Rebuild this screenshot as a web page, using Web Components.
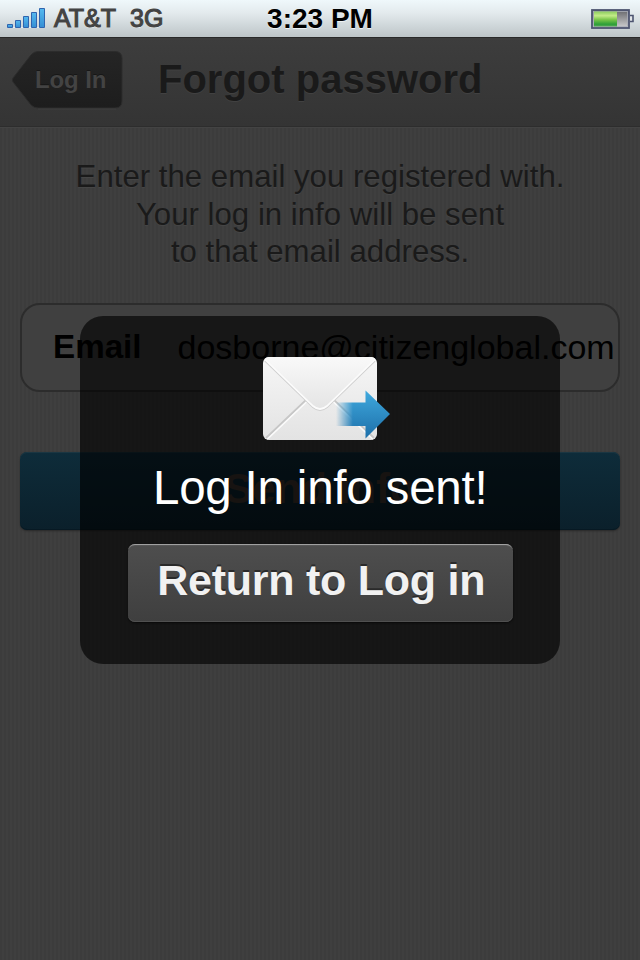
<!DOCTYPE html>
<html lang="en">
<head>
<meta charset="utf-8">
<title>Forgot password</title>
<style>
body{margin:0;width:640px;height:960px;overflow:hidden;font-family:"Liberation Sans",Arial,sans-serif}
</style>
</head>
<body>
<phone-screen>
  <status-bar slot="status" carrier="AT&amp;T" network="3G" time="3:23 PM"></status-bar>
  <nav-header slot="header"><back-button slot="back">Log In</back-button>Forgot password</nav-header>
  <intro-text>Enter the email you registered with.<br>Your log in info will be sent<br>to that email address.</intro-text>
  <form-field label="Email">dosborne@citizenglobal.com</form-field>
  <submit-button>Send info</submit-button>
  <message-dialog slot="dialog">
    <mail-sent-icon slot="icon"></mail-sent-icon>
    Log In info sent!
    <dialog-button slot="action">Return to Log in</dialog-button>
  </message-dialog>
</phone-screen>
<script>
function define(name, html) {
  customElements.define(name, class extends HTMLElement {
    constructor() {
      super();
      const t = document.createElement('template');
      t.innerHTML = html;
      this.attachShadow({mode: 'open'}).append(t.content.cloneNode(true));
    }
    connectedCallback() {
      this.shadowRoot.querySelectorAll('[data-attr]').forEach(n => {
        n.textContent = this.getAttribute(n.dataset.attr);
      });
    }
  });
}

define('phone-screen', `<style>
:host{position:relative;display:flex;flex-direction:column;width:640px;height:960px;overflow:hidden;background:repeating-linear-gradient(90deg,#3c3c3c 0 2px,#3f3f3f 2px 4px)}
main{display:flex;flex-direction:column;padding:31px 20px 0}
</style><slot name="status"></slot><slot name="header"></slot><main><slot></slot></main><slot name="dialog"></slot>`);

define('status-bar', `<style>
:host{display:grid;grid-template-columns:1fr auto 1fr;height:37px;box-sizing:border-box;background:linear-gradient(#eff8fb 0,#e3eaed 35%,#bdc5c8 100%);align-items:start}
.left{display:flex;gap:14px;padding:4px 0 0 7px;color:#434343;font-size:25px;line-height:28px;-webkit-text-stroke:1.1px #434343;text-shadow:0 1px #f4f8fa}
.signal{display:block;margin:4px -5px 0 0}
time{font-weight:700;font-size:28px;line-height:32px;padding-top:3px;color:#000;text-shadow:0 1px #eef2f4}
.battery{justify-self:end;margin:9px 6px 0 0}
</style>
<div class="left"><svg class="signal" width="38" height="20" viewBox="0 0 38 20"><defs><linearGradient id="s" x2="0" y2="1"><stop stop-color="#55b9ef"/><stop offset="1" stop-color="#348ed4"/></linearGradient></defs><path d="M0 20h38" stroke="#f4f8fa" stroke-width="1.5"/><g fill="url(#s)" stroke="#2f64ae"><path d="M.5 16.500h5v3h-5z"/><path d="M8.500 12.500h5v7h-5z"/><path d="M16.500 8.500h5v11h-5z"/><path d="M24.500 4.500h5v15h-5z"/><path d="M32.500 .5h5v19h-5z"/></g></svg><span data-attr="carrier"></span><span data-attr="network"></span></div>
<time data-attr="time"></time>
<svg class="battery" width="43" height="20" viewBox="0 0 43 20"><defs><linearGradient id="g" x2="0" y2="1"><stop stop-color="#8ccc5e"/><stop offset=".28" stop-color="#c3eb88"/><stop offset=".55" stop-color="#78c548"/><stop offset=".85" stop-color="#2c9f38"/><stop offset="1" stop-color="#55a956"/></linearGradient><linearGradient id="e" x2="0" y2="1"><stop stop-color="#66666a"/><stop offset="1" stop-color="#d0d0d2"/></linearGradient></defs><rect x="1" y="1" width="37" height="18" fill="url(#e)" stroke="#4d5470" stroke-width="1.8"/><rect x="2.500" y="2.500" width="34" height="15" fill="none" stroke="#aaadb8" stroke-width=".8"/><rect x="3" y="2.500" width="23" height="15" fill="url(#g)"/><path d="M39 6.500h3v6h-3" fill="#e2e5e8" stroke="#4d5470" stroke-width="1.6"/></svg>`);

define('nav-header', `<style>
:host{display:flex;align-items:center;position:relative;height:90px;box-sizing:border-box;padding:0 12px 5px 11px;background:linear-gradient(#3d3d3d,#343434);border-top:1px solid #292929;border-bottom:1px solid #2d2d2d;box-shadow:0 1px #434343}
h1{margin:-1px 0 0 35px;font-size:40px;line-height:46px;font-weight:700;color:#1a1a1a;text-shadow:0 1px #414141;white-space:nowrap}
</style><slot name="back"></slot><h1><slot></slot></h1>`);

define('back-button', `<style>
:host{display:grid;width:112px;height:60px;font-weight:700;font-size:24px;color:#434343}
svg,span{grid-area:1/1}
span{align-self:center;padding-left:24px;line-height:28px;letter-spacing:-.1px;text-shadow:0 -1px #171717}
</style><svg width="112" height="60" viewBox="0 0 112 60"><defs><linearGradient id="b" x2="0" y2="1"><stop stop-color="#252525"/><stop offset="1" stop-color="#1d1d1d"/></linearGradient></defs><path d="M27 1.500H104Q111 1.500 111 8.500V51Q111 58 104 58H27Q23 58 20 55L2 32Q.5 30 2 28L20 5Q23 1.500 27 1.500Z" fill="url(#b)" stroke="#2c2c2c"/><path d="M27 59H105" stroke="#434343" stroke-width=".7"/></svg><span><slot></slot></span>`);

define('intro-text', `<style>
:host{display:block;height:145px;text-align:center;font-size:31.200px;line-height:37.600px;color:#1a1a1a;text-shadow:0 1px #454545;white-space:nowrap}
</style><slot></slot>`);

define('form-field', `<style>
:host{display:flex;align-items:center;gap:36px;box-sizing:border-box;height:89px;padding:0 0 1px 31px;border:2px solid #2c2c2c;border-radius:20px;background:#404040;font-size:34px;line-height:40px;color:#000;white-space:nowrap}
b{font-size:33.200px}
</style><b data-attr="label"></b><span><slot></slot></span>`);

define('submit-button', `<style>
:host{display:flex;justify-content:center;align-items:center;height:78px;margin-top:60px;box-sizing:border-box;padding-bottom:4px;border-radius:7px;background:linear-gradient(#0e2c3a,#0b202b);box-shadow:inset 0 1px #1b3642,inset 0 -1px #071923,0 1px 2px #292929;font-size:42px;font-weight:700;color:#40372f}
</style><slot></slot>`);

define('message-dialog', `<style>
:host{position:absolute;left:80px;top:316px;width:479.500px;height:348px;box-sizing:border-box;padding-top:41px;border-radius:23px;background:rgba(0,0,0,.64);display:flex;flex-direction:column;align-items:center;color:#fff}
p{margin:19px 0 28px;font-size:47.500px;line-height:56px;white-space:nowrap;letter-spacing:-.2px;padding-left:1px}
</style><slot name="icon"></slot><p><slot></slot></p><slot name="action"></slot>`);

define('mail-sent-icon', `<style>
:host{display:block;width:114px;height:84px}svg{display:block;overflow:visible}
</style><svg width="128" height="84" viewBox="0 0 128 84"><defs>
<linearGradient id="p" x2="0" y2="1"><stop stop-color="#f6f6f6"/><stop offset="1" stop-color="#e3e3e3"/></linearGradient>
<linearGradient id="f" x2="0" y2="1"><stop stop-color="#fafafa"/><stop offset="1" stop-color="#e4e4e4"/></linearGradient>
<linearGradient id="a" x2="0" y2="1"><stop stop-color="#3fa9de"/><stop offset="1" stop-color="#1d6fa9"/></linearGradient>
<linearGradient id="m"><stop offset="0" stop-color="#fff" stop-opacity="0"/><stop offset=".3" stop-color="#fff"/></linearGradient>
<mask id="k" maskUnits="userSpaceOnUse" x="73" y="30" width="56" height="54"><rect x="73" y="30" width="56" height="54" fill="url(#m)"/></mask>
<clipPath id="c"><rect width="114" height="83" rx="6"/></clipPath></defs>
<g clip-path="url(#c)"><rect width="114" height="83" fill="url(#p)"/>
<path d="M3 81L43 43M111 81L71 43" fill="none" stroke="#c7c7c7" stroke-width="1.800"/><path d="M4 82.500L44 44.500M110 82.500L70 44.500" fill="none" stroke="#fbfbfb" stroke-width="1.500"/>
<path d="M2 2L50 49Q57 55 64 49L112 2V-2H2Z" fill="url(#f)"/><path d="M2 4L50 50.500Q57 56 64 50.500L112 4" fill="none" stroke="#d0d0d0" stroke-width="1.500"/><path d="M2 2.500L50 49Q57 55 64 49L112 2.500" fill="none" stroke="#fbfbfb" stroke-width="1.700"/></g>
<path d="M73 45.500H102.500V33.500L127 57L102.500 81.500V69H73Z" fill="url(#a)" mask="url(#k)"/></svg>`);

define('dialog-button', `<style>
:host{display:flex;justify-content:center;align-items:center;width:385px;height:78px;margin-left:1px;box-sizing:border-box;padding:0 0 6px 2px;border-radius:7px;background:linear-gradient(#4e4e4e,#3f3f3f);box-shadow:inset 0 2px 1px -1px #aaa,inset 0 -1px #505050,0 1px 2px #090909;color:#f1f1f1;font-size:43px;letter-spacing:-.25px;line-height:50px;font-weight:700;text-shadow:0 -2px #2a2a2a;white-space:nowrap}
</style><slot></slot>`);
</script>
</body>
</html>
